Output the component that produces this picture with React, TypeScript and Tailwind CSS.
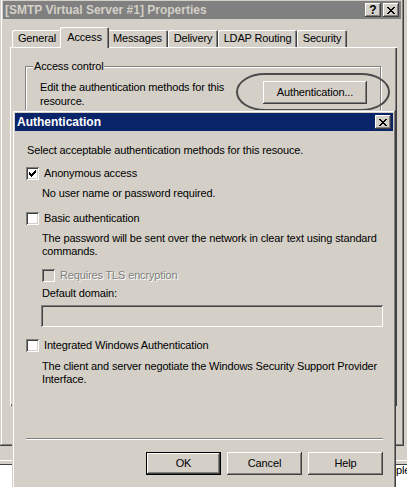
import React from "react";

const FONT = "font-['Liberation_Sans',Arial,sans-serif]";

function CheckMark() {
  const px: [number, number][] = [
    [6, 0],
    [5, 1], [6, 1],
    [0, 2], [4, 2], [5, 2], [6, 2],
    [0, 3], [1, 3], [3, 3], [4, 3], [5, 3],
    [0, 4], [1, 4], [2, 4], [3, 4], [4, 4],
    [1, 5], [2, 5], [3, 5],
    [2, 6],
  ];
  return (
    <svg className="absolute left-[3px] top-[3px]" width="7" height="7" viewBox="0 0 7 7" shapeRendering="crispEdges">
      {px.map(([x, y], i) => (
        <rect key={i} x={x} y={y} width="1" height="1" fill="#000" />
      ))}
    </svg>
  );
}

function CloseGlyph() {
  const rows = [
    "##....##",
    ".##..##.",
    "..####..",
    "...##...",
    "..####..",
    ".##..##.",
    "##....##",
  ];
  return (
    <svg width="8" height="7" viewBox="0 0 8 7" shapeRendering="crispEdges">
      {rows.flatMap((r, y) =>
        r.split("").map((c, x) => (c === "#" ? <rect key={`${x}-${y}`} x={x} y={y} width="1" height="1" fill="#000" /> : null))
      )}
    </svg>
  );
}

function Checkbox({ checked, disabled }: { checked?: boolean; disabled?: boolean }) {
  return (
    <div
      className={`relative w-[13px] h-[13px] shrink-0 ${disabled ? "bg-[#d4d0c8]" : "bg-white"} shadow-[inset_1px_1px_0_#808080,inset_-1px_-1px_0_#ffffff,inset_2px_2px_0_#404040,inset_-2px_-2px_0_#d4d0c8]`}
    >
      {checked && <CheckMark />}
    </div>
  );
}

function TitleButton({ children }: { children: React.ReactNode }) {
  return (
    <div className="w-[16px] h-[14px] flex items-center justify-center bg-[#d4d0c8] shadow-[inset_-1px_-1px_0_#404040,inset_1px_1px_0_#ffffff,inset_-2px_-2px_0_#808080]">
      {children}
    </div>
  );
}

function Tab({ label, w, active }: { label: string; w: number; active?: boolean }) {
  if (active) {
    return (
      <div
        style={{ width: w + 4 }}
        className="relative z-10 -mx-[2px] -mb-[1px] h-[21px] flex items-center justify-center bg-[#d4d0c8] rounded-t-[2px] shadow-[inset_1px_1px_0_#ffffff,inset_-1px_0_0_#404040,inset_-2px_0_0_#808080]"
      >
        <span className="-mt-[1px]">{label}</span>
      </div>
    );
  }
  return (
    <div
      style={{ width: w }}
      className="h-[17px] flex items-center justify-center bg-[#d4d0c8] rounded-t-[2px] shadow-[inset_1px_1px_0_#ffffff,inset_-1px_0_0_#404040,inset_-2px_0_0_#808080]"
    >
      {label}
    </div>
  );
}

function Button({ label, def }: { label: string; def?: boolean }) {
  return (
    <div
      className={`w-[75px] h-[23px] flex items-center justify-center bg-[#d4d0c8] ${def ? "border border-black" : ""} shadow-[inset_-1px_-1px_0_#404040,inset_1px_1px_0_#ffffff,inset_-2px_-2px_0_#808080]`}
    >
      {label}
    </div>
  );
}

export default function App() {
  const tabs = [
    { label: "General", w: 50 },
    { label: "Access", w: 45, active: true },
    { label: "Messages", w: 61 },
    { label: "Delivery", w: 50 },
    { label: "LDAP Routing", w: 79 },
    { label: "Security", w: 50 },
  ];

  return (
    <div className={`relative w-[407px] h-[487px] overflow-hidden bg-[#d4d0c8] text-[11px] leading-[13px] text-black tracking-[-0.15px] ${FONT}`}>
      {/* window behind, at the bottom */}
      <div className="absolute left-0 top-[446px] w-[407px] h-[41px] flex flex-col">
        <div className="h-[14px] bg-[#d4d0c8]" />
        <div className="h-[1px] bg-white" />
        <div className="h-[3px] bg-[#d4d0c8]" />
        <div className="h-[1px] bg-[#404040]" />
        <div className="flex-1 bg-white relative">
          <span className="absolute left-[396px] top-[-1px]">ple</span>
        </div>
      </div>

      {/* Properties window */}
      <div className="absolute left-0 top-[-2px] w-[404px] h-[448px] bg-[#d4d0c8] p-[3px] shadow-[inset_-1px_-1px_0_#404040,inset_1px_1px_0_#d4d0c8,inset_-2px_-2px_0_#808080,inset_2px_2px_0_#ffffff]">
        <div className="h-[18px] bg-[#808080] flex items-center pl-[2px] pr-[2px]">
          <span className="text-[12px] font-bold text-[#d4d0c8] tracking-[0px] whitespace-nowrap">[SMTP Virtual Server #1] Properties</span>
          <div className="ml-auto flex items-center gap-[2px]">
            <TitleButton>
              <span className="text-[12px] font-bold leading-[12px] tracking-[0px]">?</span>
            </TitleButton>
            <TitleButton>
              <CloseGlyph />
            </TitleButton>
          </div>
        </div>

        <div className="pl-[7px] pt-[8px]">
          <div className="h-[20px] pl-[2px] flex items-end">
            {tabs.map((t) => (
              <Tab key={t.label} label={t.label} w={t.w} active={t.active} />
            ))}
          </div>
          <div className="w-[387px] h-[359px] bg-[#d4d0c8] pt-[19px] pl-[15px] shadow-[inset_1px_1px_0_#ffffff,inset_-1px_-1px_0_#404040,inset_-2px_-2px_0_#808080]">
            <div className="relative w-[356px] h-[200px] border border-[#808080] shadow-[inset_1px_1px_0_#ffffff,1px_1px_0_#ffffff]">
              <span className="absolute left-[7px] -top-[7px] px-[1px] bg-[#d4d0c8]">Access control</span>
              <div className="flex items-start pl-[14px] pr-[13px] pt-[13px]">
                <div className="leading-[14px] whitespace-nowrap">
                  <div>Edit the authentication methods for this</div>
                  <div>resource.</div>
                </div>
                <div className="ml-auto mt-[1px] w-[104px] h-[23px] flex items-center justify-center shadow-[inset_-1px_-1px_0_#404040,inset_1px_1px_0_#ffffff,inset_-2px_-2px_0_#808080]">
                  Authentication...
                </div>
              </div>
            </div>
          </div>
        </div>
      </div>

      {/* annotation ellipse */}
      <svg className="absolute left-0 top-0 pointer-events-none" width="407" height="487">
        <rect x="237" y="74" width="152" height="36" rx="28" ry="18" fill="none" stroke="#4b4b4b" strokeWidth="2" />
      </svg>

      {/* Authentication dialog */}
      <div className="absolute left-[12px] top-[110px] w-[384px] h-[400px] bg-[#d4d0c8] p-[3px] shadow-[inset_-1px_-1px_0_#404040,inset_1px_1px_0_#d4d0c8,inset_-2px_-2px_0_#808080,inset_2px_2px_0_#ffffff]">
        <div className="h-[18px] bg-[#0a246a] flex items-center pl-[2px] pr-[2px]">
          <span className="text-[12px] font-bold text-white tracking-[0px]">Authentication</span>
          <div className="ml-auto">
            <TitleButton>
              <CloseGlyph />
            </TitleButton>
          </div>
        </div>

        <div className="pl-[11px] pr-[10px] flex flex-col whitespace-nowrap">
          <div className="mt-[13px] ml-[1px]">Select acceptable authentication methods for this resouce.</div>

          <div className="mt-[10px] flex items-center gap-[5px]">
            <Checkbox checked />
            <span>Anonymous access</span>
          </div>
          <div className="mt-[7px] ml-[16px]">No user name or password required.</div>

          <div className="mt-[12px] flex items-center gap-[5px]">
            <Checkbox />
            <span>Basic authentication</span>
          </div>
          <div className="mt-[7px] ml-[16px]">
            <div>The password will be sent over the network in clear text using standard</div>
            <div>commands.</div>
          </div>

          <div className="mt-[11px] ml-[16px] flex items-center gap-[5px]">
            <Checkbox disabled />
            <span className="text-[#808080] [text-shadow:1px_1px_0_#ffffff]">Requires TLS encryption</span>
          </div>
          <div className="mt-[5px] ml-[16px]">Default domain:</div>
          <div className="mt-[5px] ml-[15px] w-[342px] h-[22px] bg-[#d4d0c8] shadow-[inset_1px_1px_0_#808080,inset_-1px_-1px_0_#ffffff,inset_2px_2px_0_#404040,inset_-2px_-2px_0_#d4d0c8]" />

          <div className="mt-[12px] flex items-center gap-[5px]">
            <Checkbox />
            <span>Integrated Windows Authentication</span>
          </div>
          <div className="mt-[8px] ml-[16px]">
            <div>The client and server negotiate the Windows Security Support Provider</div>
            <div>Interface.</div>
          </div>

          <div className="mt-[52px] w-[357px] h-[2px] border-t border-[#808080] border-b border-b-white" />

          <div className="mt-[12px] flex justify-end gap-[6px]">
            <Button label="OK" def />
            <Button label="Cancel" />
            <Button label="Help" />
          </div>
        </div>
      </div>
    </div>
  );
}
